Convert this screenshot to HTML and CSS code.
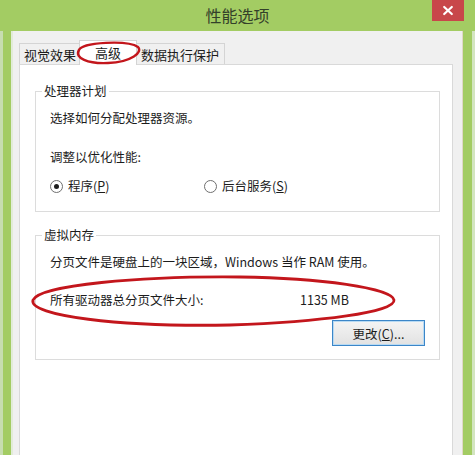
FILE: index.html
```html
<!DOCTYPE html>
<html lang="zh-CN">
<head>
<meta charset="utf-8">
<title>性能选项</title>
<link rel="stylesheet" href="styles.css">
</head>
<body>
<div class="window">
  <div class="titlebar">
    <span class="title">性能选项</span>
    <div class="close">
      <svg width="32" height="21" viewBox="0 0 32 21"><path d="M12.2 7 L19.8 14 M19.8 7 L12.2 14" stroke="#fff" stroke-width="2.2" stroke-linecap="round" fill="none"/></svg>
    </div>
  </div>
  <div class="frame">
    <div class="client">
      <div class="tabs">
        <div class="tab t1">视觉效果</div>
        <div class="tab active">高级</div>
        <div class="tab t3">数据执行保护</div>
      </div>
      <div class="panel">
        <fieldset class="group g1">
          <legend>处理器计划</legend>
          <p class="line">选择如何分配处理器资源。</p>
          <p class="line l2">调整以优化性能:</p>
          <div class="radios">
            <div class="radio r1"><span class="dot checked"></span><span>程序(<u>P</u>)</span></div>
            <div class="radio"><span class="dot"></span><span>后台服务(<u>S</u>)</span></div>
          </div>
        </fieldset>
        <fieldset class="group g2">
          <legend>虚拟内存</legend>
          <p class="line">分页文件是硬盘上的一块区域，Windows 当作 RAM 使用。</p>
          <div class="line l2 size">
            <span>所有驱动器总分页文件大小:</span>
            <span>1135 MB</span>
          </div>
          <div class="actions">
            <button class="btn" type="button">更改(<u>C</u>)...</button>
          </div>
        </fieldset>
      </div>
    </div>
  </div>
  <svg class="marks" width="475" height="455" viewBox="0 0 475 455">
    <path d="M79 50 C 82 42, 128 40, 138 47 C 143 52, 132 62, 108 63 C 88 64, 74 58, 79 50 Z" fill="none" stroke="#c3161c" stroke-width="2.4"/>
    <path d="M33 300 C 40 285, 140 276, 240 277 C 320 278, 392 288, 394 300 C 396 312, 320 322, 230 325 C 120 327, 28 316, 33 300 Z" fill="none" stroke="#c3161c" stroke-width="2.8"/>
  </svg>
</div>
</body>
</html>
```
FILE: styles.css
```css
* { box-sizing: border-box; }
html, body { margin: 0; padding: 0; }
body {
  width: 475px;
  height: 455px;
  overflow: hidden;
  font-family: "Noto Sans CJK SC", "Noto Sans", sans-serif;
  font-size: 12.5px;
  color: #1c1c1c;
  background: #a3cc63;
}
.window {
  position: relative;
  width: 475px;
  height: 455px;
  display: flex;
  flex-direction: column;
  background: #a3cc63;
}
.titlebar {
  position: relative;
  height: 31px;
  flex: none;
  display: flex;
  align-items: center;
  justify-content: center;
}
.title {
  font-size: 16px;
  line-height: 20px;
  color: #33402a;
  margin-top: -2px;
}
.close {
  position: absolute;
  top: 0;
  right: 11px;
  width: 32px;
  height: 21px;
  background: #c8474a;
}
.close svg { display: block; }
.frame {
  flex: 1;
  display: flex;
  border-left: 3px solid #c7ddb0;
  border-right: 3px solid #d3e5c0;
  padding: 0 9px 0 8px;
}
.client {
  flex: 1;
  display: flex;
  flex-direction: column;
  background: #f0f0f0;
  border-left: 2px solid #e2ecd8;
  border-right: 1px solid #e0d8c8;
  padding: 9px 9px 0 6px;
}
.tabs {
  position: relative;
  z-index: 2;
  display: flex;
  align-items: flex-end;
  height: 25px;
  margin-bottom: -1px;
  font-size: 13px;
}
.tab {
  height: 21px;
  margin-bottom: 1px;
  display: flex;
  align-items: center;
  border: 1px solid #d4d4d4;
  border-bottom: none;
  background: #f0f0f0;
  color: #1c1c1c;
  white-space: nowrap;
}
.t1 { padding: 0 4px; }
.t3 { padding: 0 5px; }
.tab.active {
  position: relative;
  height: 25px;
  margin: 0 -2px;
  padding: 0 15px 1px;
  background: #fff;
  z-index: 3;
}
.panel {
  flex: 1;
  background: #fff;
  border: 1px solid #d9d9d9;
  border-bottom: none;
  padding: 17px 12px 0 15px;
}
.group {
  margin: 0;
  border: 1px solid #dcdcdc;
  padding: 9px 14px 13px 14px;
  min-inline-size: 0;
}
.g1 { padding-bottom: 16px; }
.g2 { margin-top: 14px; }
.group legend {
  margin-left: -8px;
  padding: 0 2px;
  line-height: 18px;
}
.line {
  margin: 0;
  line-height: 18px;
  white-space: nowrap;
}
.l2 { margin-top: 21px; }
.g2 .l2 { margin-top: 20px; }
.radios {
  display: flex;
  margin-top: 11px;
  line-height: 18px;
}
.radio {
  display: flex;
  align-items: center;
  gap: 5px;
}
.r1 { width: 154px; }
.dot {
  position: relative;
  width: 13px;
  height: 13px;
  border: 1px solid #6f6f6f;
  border-radius: 50%;
  background: #fff;
}
.dot.checked::after {
  content: "";
  position: absolute;
  left: 3px;
  top: 3px;
  width: 5px;
  height: 5px;
  border-radius: 50%;
  background: #1e1e1e;
}
.size {
  display: grid;
  grid-template-columns: 250px auto;
}
.actions {
  display: flex;
  justify-content: flex-end;
  margin-top: 11px;
}
.btn {
  width: 93px;
  height: 26px;
  padding: 0;
  font-family: inherit;
  font-size: 12.5px;
  color: #1c1c1c;
  border: 1px solid #3c86c8;
  box-shadow: inset 0 0 0 1px #b8daf3;
  background: linear-gradient(#f4f4f4, #e2e2e2);
  border-radius: 0;
}
.marks {
  position: absolute;
  top: 0;
  left: 0;
  pointer-events: none;
  z-index: 10;
}
```
